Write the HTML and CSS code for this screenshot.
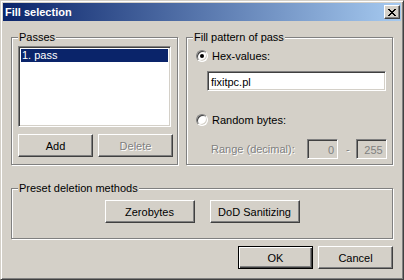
FILE: index.html
```html
<!DOCTYPE html>
<html lang="en">
<head>
  <meta charset="UTF-8">
  <title>Fill selection</title>
  <link rel="stylesheet" href="styles.css">
</head>
<body>
  <div class="window">
    <div class="titlebar">
      <span class="title">Fill selection</span>
      <button class="close" aria-label="Close">
        <svg width="8" height="7" viewBox="0 0 8 7" shape-rendering="crispEdges">
          <path d="M0 0h2v1h-2zM6 0h2v1h-2zM1 1h2v1h-2zM5 1h2v1h-2zM2 2h4v1h-4zM3 3h2v1h-2zM2 4h4v1h-4zM1 5h2v1h-2zM5 5h2v1h-2zM0 6h2v1h-2zM6 6h2v1h-2z" fill="#000"/>
        </svg>
      </button>
    </div>

    <div class="dialog">
      <div class="top-row">
        <div class="group passes">
          <span class="caption">Passes</span>
          <div class="listbox">
            <div class="item selected">1. pass</div>
          </div>
          <div class="btn-row">
            <button class="btn">Add</button>
            <button class="btn" disabled>Delete</button>
          </div>
        </div>

        <div class="group pattern">
          <span class="caption">Fill pattern of pass</span>
          <div class="radio-row">
            <span class="radio checked"></span>
            <span>Hex-values:</span>
          </div>
          <div class="textbox hex">fixitpc.pl</div>
          <div class="radio-row random">
            <span class="radio"></span>
            <span>Random bytes:</span>
          </div>
          <div class="range-row">
            <span class="disabled-text range-label">Range (decimal):</span>
            <span class="textbox small off">0</span>
            <span class="disabled-text dash">-</span>
            <span class="textbox small off">255</span>
          </div>
        </div>
      </div>

      <div class="group preset">
        <span class="caption">Preset deletion methods</span>
        <button class="btn wide">Zerobytes</button>
        <button class="btn wide">DoD Sanitizing</button>
      </div>

      <div class="dialog-buttons">
        <button class="btn default">OK</button>
        <button class="btn">Cancel</button>
      </div>
    </div>
  </div>
</body>
</html>
```

FILE: styles.css
```css
* {
  box-sizing: border-box;
}

body {
  margin: 0;
  font-family: "Liberation Sans", Arial, sans-serif;
  font-size: 11px;
  color: #000;
  background: #d4d0c8;
}

.window {
  width: 404px;
  height: 280px;
  padding: 2px;
  background: #d4d0c8;
  border: 1px solid;
  border-color: #d4d0c8 #404040 #404040 #d4d0c8;
  box-shadow: inset 1px 1px #fff, inset -1px -1px #808080;
}

.titlebar {
  height: 18px;
  display: flex;
  align-items: center;
  justify-content: space-between;
  padding: 0 1px 0 2px;
  background: linear-gradient(to right, #0a246a, #a6caf0);
}

.title {
  color: #fff;
  font-weight: bold;
  line-height: 13px;
}

.close {
  width: 16px;
  height: 14px;
  padding: 0;
  display: flex;
  align-items: center;
  justify-content: center;
  background: #d4d0c8;
  border: 1px solid;
  border-color: #fff #404040 #404040 #fff;
  box-shadow: inset -1px -1px #808080;
}

.close svg {
  display: block;
  margin: 0 0 0 -1px;
}

.dialog {
  padding: 16px 8px 0 8px;
}

.top-row {
  display: flex;
  gap: 8px;
}

.group {
  position: relative;
  border: 1px solid #808080;
  box-shadow: inset 1px 1px #fff, 1px 1px #fff;
}

.caption {
  position: absolute;
  top: -7px;
  left: 6px;
  padding: 0 1px;
  line-height: 13px;
  background: #d4d0c8;
}

.passes {
  width: 167px;
  height: 128px;
  padding: 8px 0 0 6px;
}

.listbox {
  width: 153px;
  height: 81px;
  background: #fff;
  border: 1px solid;
  border-color: #808080 #fff #fff #808080;
  box-shadow: inset 1px 1px #404040, inset -1px -1px #d4d0c8;
  padding: 2px;
}

.item {
  height: 13px;
  line-height: 13px;
  padding-left: 1px;
}

.item.selected {
  background: #0a246a;
  color: #fff;
}

.btn-row {
  display: flex;
  gap: 5px;
  margin-top: 7px;
}

.btn {
  width: 75px;
  height: 23px;
  padding: 0;
  font: inherit;
  color: #000;
  background: #d4d0c8;
  border: 1px solid;
  border-color: #fff #404040 #404040 #fff;
  box-shadow: inset -1px -1px #808080;
}

.btn:disabled,
.disabled-text {
  color: #808080;
  text-shadow: 1px 1px #fff;
}

.pattern {
  width: 207px;
  height: 128px;
  padding: 11px 0 0 9px;
}

.radio-row {
  display: flex;
  align-items: center;
  gap: 4px;
  height: 13px;
}

.radio-row.random {
  margin-top: 22px;
}

.radio {
  position: relative;
  width: 12px;
  height: 12px;
  border-radius: 50%;
  background: #fff;
  border: 1px solid;
  border-color: #808080 #fff #fff #808080;
  box-shadow: inset 1px 1px #404040, inset -1px -1px #d4d0c8;
}

.radio.checked::after {
  content: "";
  position: absolute;
  left: 3px;
  top: 3px;
  width: 4px;
  height: 4px;
  border-radius: 50%;
  background: #000;
}

.textbox {
  height: 20px;
  line-height: 16px;
  padding: 2px 3px;
  background: #fff;
  border: 1px solid;
  border-color: #808080 #fff #fff #808080;
  box-shadow: inset 1px 1px #404040, inset -1px -1px #d4d0c8;
}

.textbox.hex {
  width: 179px;
  margin: 9px 0 0 11px;
}

.range-row {
  display: flex;
  align-items: center;
  margin: 13px 0 0 15px;
}

.range-label {
  width: 96px;
}

.textbox.small {
  width: 31px;
  text-align: right;
}

.textbox.off {
  background: #d4d0c8;
  color: #808080;
}

.dash {
  margin: 0 6px 0 8px;
}

.preset {
  height: 51px;
  margin-top: 23px;
  display: flex;
  justify-content: center;
  align-items: flex-start;
  gap: 15px;
  padding-top: 11px;
}

.btn.wide {
  width: 90px;
}

.dialog-buttons {
  display: flex;
  justify-content: flex-end;
  gap: 5px;
  margin-top: 7px;
}

.btn.default {
  border: 1px solid #000;
  box-shadow: inset 1px 1px #fff, inset -1px -1px #404040, inset -2px -2px #808080;
}
```
